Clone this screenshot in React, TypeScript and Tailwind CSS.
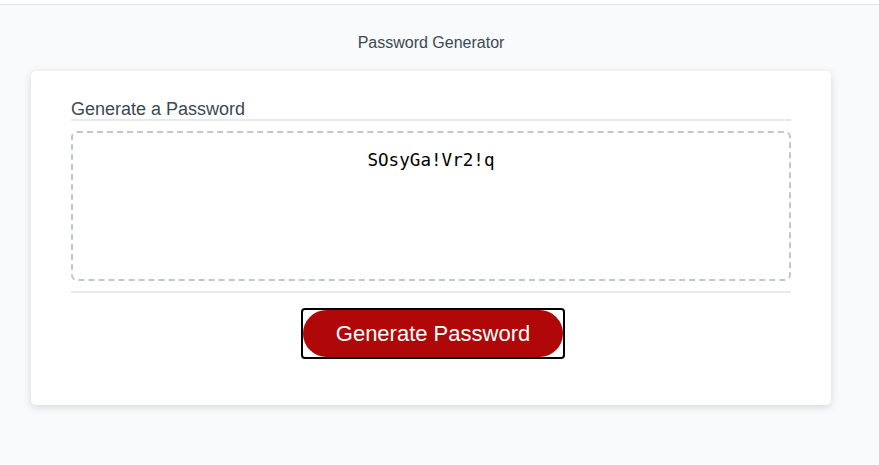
import React, { useState } from 'react';

const chars = 'ABCDEFGHIJKLMNOPQRSTUVWXYZabcdefghijklmnopqrstuvwxyz0123456789!@#$%';

export default function App() {
  const [password, setPassword] = useState('SOsyGa!Vr2!q');

  const generate = () => {
    let out = '';
    for (let i = 0; i < 12; i++) out += chars[Math.floor(Math.random() * chars.length)];
    setPassword(out);
  };

  return (
    <div className="min-h-[465px] bg-[#f9fafb] font-['Liberation_Sans',Arial,sans-serif]">
      <div className="h-[5px] bg-white border-b border-[#e1e3e6]" />
      <div className="pt-[27px] pl-[31px]">
        <header className="w-[800px] text-center text-[16px] leading-[22px] text-[#3b4954] mb-[17px]">
          Password Generator
        </header>

        {/* Card */}
        <div className="w-[800px] bg-white rounded-[5px] shadow-[0_2px_8px_0_rgba(0,0,0,0.15)] px-[40px] pt-[29px] pb-[46px]">
          <div className="border-b-2 border-[#e7e9eb]">
            <h2 className="text-[18px] leading-[19px] text-[#3b4954]">Generate a Password</h2>
          </div>

          <textarea
            readOnly
            value={password}
            aria-label="Generated Password"
            className="block w-full h-[150px] mt-[10px] mb-[10px] pt-[15px] px-[10px] pb-[5px] border-2 border-dashed border-[#c0c7cf] rounded-[6px] resize-none overflow-hidden text-center text-[17.6px] leading-[24px] text-black font-['DejaVu_Sans_Mono',monospace] outline-none"
          />

          <div className="border-t-2 border-[#e7e9eb] flex justify-center pt-[15px]">
            <button
              onClick={generate}
              className="ml-[4px] rounded-[4px] border-2 border-black overflow-hidden"
            >
              <span className="block bg-[#b00808] text-white text-[22px] leading-[23px] rounded-[25px] px-[33px] py-[12px]">
                Generate Password
              </span>
            </button>
          </div>
        </div>
      </div>
    </div>
  );
}
